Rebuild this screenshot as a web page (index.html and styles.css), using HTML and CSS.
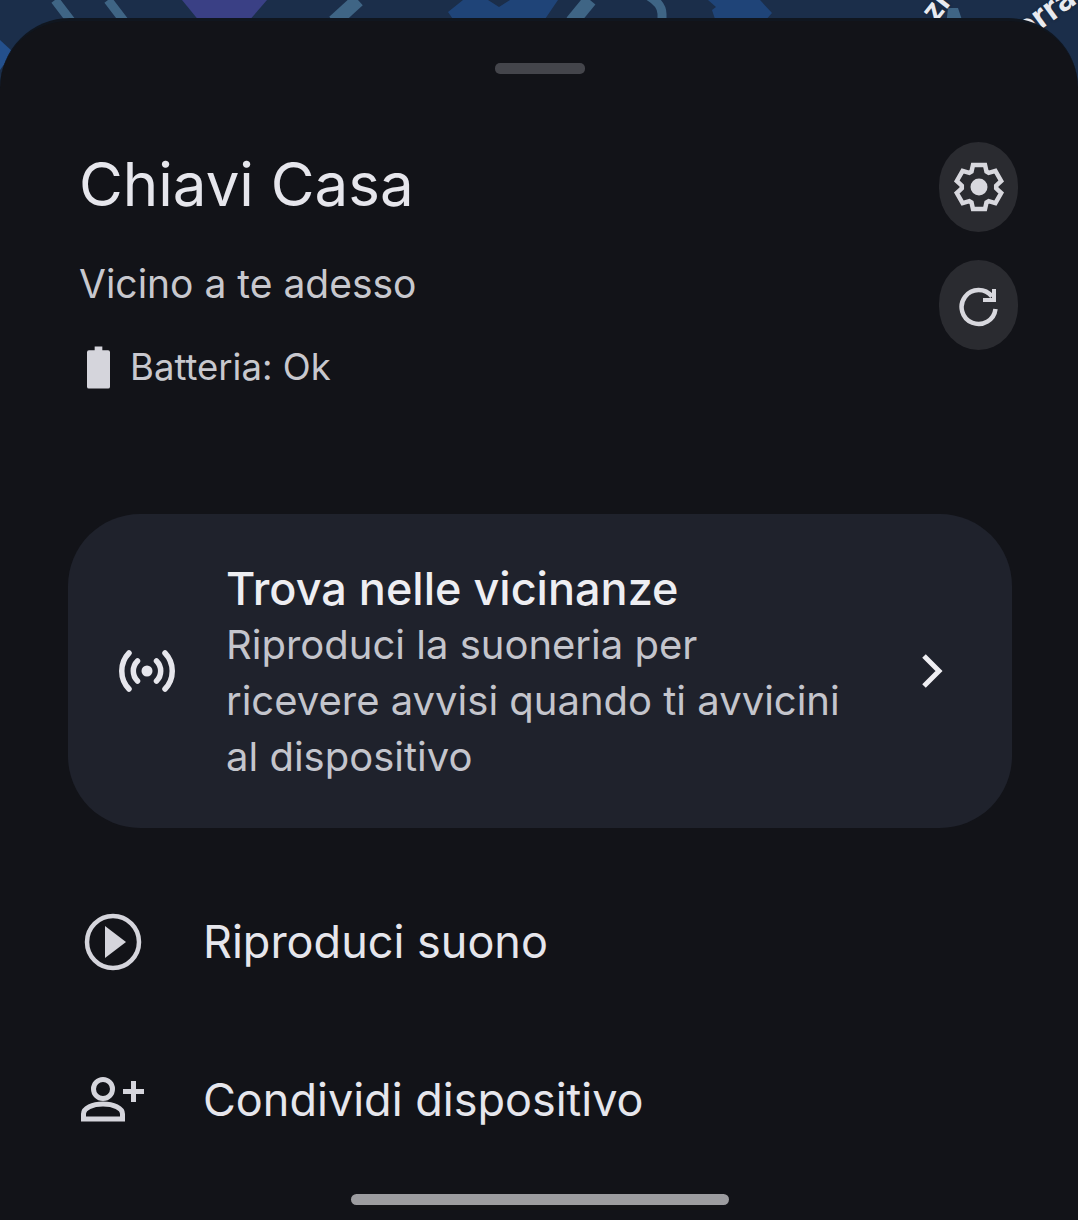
FILE: index.html
```html
<!DOCTYPE html>
<html lang="it">
<head>
<meta charset="utf-8">
<title>Chiavi Casa</title>
<link rel="stylesheet" href="styles.css">
</head>
<body>
<div class="map">
  <svg class="map-art" viewBox="0 0 1078 90" width="1078" height="90">
    <path d="M182 0h85l-19 22h-48z" fill="#3a4085"/>
    <path d="M448 12l15-12h25l11 7 11-7h48l-15 22h-88z" fill="#1f4478"/>
    <path d="M708 0h52l12 13-8 9h-48l-4-12 4-3z" fill="#1f4478"/>
    <path d="M0 40l13 12-13 18z" fill="#24508c"/>
    <path d="M948 8h10l6 18h-18z" fill="#3f6585"/>
    <g fill="none" stroke="#3f6585">
      <path d="M55 0l16 21M108 0l16 21" stroke-width="9"/>
      <path d="M358 0l-24 22" stroke-width="14"/>
      <path d="M590 0l-18 22" stroke-width="14"/>
      <path d="M645-6c12 6 17 12 17 20v8" stroke-width="9"/>
    </g>
  </svg>
  <span class="map-label map-label-a">zi</span>
  <span class="map-label map-label-b">erra</span>
</div>
<main class="sheet">
  <div class="handle"></div>
  <header class="head">
    <div class="head-text">
      <h1 class="title">Chiavi Casa</h1>
      <p class="subtitle">Vicino a te adesso</p>
      <div class="battery">
        <svg class="battery-icon" viewBox="0 0 24 44" width="23" height="43"><path d="M8 0h8v4h6a2 2 0 0 1 2 2v36a2 2 0 0 1-2 2H2a2 2 0 0 1-2-2V6a2 2 0 0 1 2-2h6z" fill="#d5d5dc"/></svg>
        <span class="battery-text">Batteria: Ok</span>
      </div>
    </div>
    <div class="head-actions">
      <button class="round-btn" aria-label="Impostazioni">
        <svg viewBox="-26 -26 52 52" width="52" height="52"><path d="M-6-22H6L7.500-15.500 9.700-14.200 16.400-16.200 22.200-6 17.200-1.300V1.300L22.200 6 16.400 16.200 9.700 14.200 7.500 15.500 6 22H-6L-7.500 15.500-9.700 14.200-16.400 16.200-22.200 6-17.200 1.300V-1.300L-22.200-6-16.400-16.200-9.700-14.200-7.500-15.500Z" fill="none" stroke="#d8d8de" stroke-width="4.500" stroke-linejoin="miter"/><circle r="8.500" fill="#d8d8de"/></svg>
      </button>
      <button class="round-btn" aria-label="Aggiorna">
        <svg viewBox="0 0 44 44" width="44" height="44"><path d="M35 13.500A17 17 0 1 0 38.500 26" fill="none" stroke="#d8d8de" stroke-width="4.500"/><path d="M39 6v13H26v-4h9V6z" fill="#d8d8de"/></svg>
      </button>
    </div>
  </header>
  <section class="card">
    <svg class="card-icon" viewBox="0 0 60 44" width="60" height="44">
      <circle cx="30" cy="22" r="5.500" fill="#e6e6ec"/>
      <g fill="none" stroke="#e6e6ec" stroke-width="5.500" stroke-linecap="round">
        <path d="M20.500 12a14 14 0 0 0 0 20M39.500 12a14 14 0 0 1 0 20"/>
        <path d="M12 4a26 26 0 0 0 0 36M48 4a26 26 0 0 1 0 36"/>
      </g>
    </svg>
    <div class="card-text">
      <h2 class="card-title">Trova nelle vicinanze</h2>
      <p class="card-body">Riproduci la suoneria per<br>ricevere avvisi quando ti avvicini<br>al dispositivo</p>
    </div>
    <svg class="chevron" viewBox="0 0 24 36" width="24" height="36"><path d="M4 3l15 15L4 33" fill="none" stroke="#eeeef2" stroke-width="5"/></svg>
  </section>
  <div class="row row-sound">
    <svg class="row-icon" viewBox="0 0 60 60" width="60" height="60"><circle cx="30" cy="30" r="26" fill="none" stroke="#d5d5dc" stroke-width="4.500"/><path d="M22 14l21 16-21 16z" fill="#d5d5dc"/></svg>
    <span class="row-label">Riproduci suono</span>
  </div>
  <div class="row row-share">
    <svg class="row-icon" viewBox="0 0 66 48" width="66" height="48"><circle cx="23" cy="13" r="9.500" fill="none" stroke="#d5d5dc" stroke-width="5"/><path d="M3.500 43v-5c0-6 9-10 19.500-10s19.500 4 19.500 10v5z" fill="none" stroke="#d5d5dc" stroke-width="5"/><path d="M43 15.500h21M53.500 5v21" fill="none" stroke="#d5d5dc" stroke-width="5"/></svg>
    <span class="row-label">Condividi dispositivo</span>
  </div>
  <div class="nav-bar"></div>
</main>
</body>
</html>
```

FILE: styles.css
```css
* { box-sizing: border-box; }
html, body { margin: 0; padding: 0; }
body {
  width: 1078px;
  height: 1220px;
  overflow: hidden;
  position: relative;
  background: #1b2e4a;
  font-family: Inter, Roboto, sans-serif;
  padding-top: 18px;
}
.map { position: absolute; inset: 0 0 auto 0; height: 90px; }
.map-art { display: block; }
.map-label {
  position: absolute;
  color: #e8eaf0;
  font-weight: 700;
  line-height: 1;
  text-shadow: 0 0 3px #14202f;
}
.map-label-a { left: 922px; top: -8px; font-size: 30px; transform: rotate(-52deg); }
.map-label-b { left: 1012px; top: -4px; font-size: 33px; transform: rotate(-36deg); }
.sheet {
  position: relative;
  height: 1202px;
  background: #121318;
  border-top: 3px solid #10161f;
  border-radius: 70px 70px 0 0;
  padding-top: 42px;
}
.handle {
  width: 90px;
  height: 11px;
  margin: 0 0 0 495px;
  border-radius: 5px;
  background: #44454b;
}
.head {
  display: flex;
  justify-content: space-between;
  align-items: flex-start;
  padding: 74px 60px 0 79px;
}
.title {
  margin: 0;
  font-size: 60px;
  line-height: 72px;
  font-weight: 400;
  color: #e6e6ec;
}
.subtitle {
  margin: 40px 0 0;
  font-size: 39px;
  line-height: 48px;
  font-weight: 400;
  color: #c8c8ce;
}
.battery {
  display: flex;
  align-items: center;
  gap: 20px;
  margin-top: 38px;
  padding-left: 8px;
}
.battery-text {
  margin-top: -2px;
  font-size: 36.500px;
  line-height: 44px;
  color: #c8c8ce;
}
.head-actions {
  display: flex;
  flex-direction: column;
  gap: 28px;
  margin-top: -6px;
}
.round-btn {
  width: 79px;
  height: 90px;
  padding: 0;
  border: 0;
  border-radius: 40px / 44px;
  background: #2a2b30;
  display: flex;
  align-items: center;
  justify-content: center;
}
.card {
  display: flex;
  align-items: center;
  width: 944px;
  height: 314px;
  margin: 125px 0 0 68px;
  padding: 0 68px 0 49px;
  border-radius: 72px;
  background: #1f222c;
}
.card-icon { flex: none; }
.card-text { flex: 1; margin: 4px 0 0 49px; }
.card-title {
  margin: 0;
  font-size: 45px;
  line-height: 56px;
  font-weight: 500;
  color: #eeeef2;
}
.card-body {
  margin: 0;
  font-size: 40px;
  line-height: 56px;
  color: #c4c5cc;
}
.chevron { flex: none; }
.row { display: flex; align-items: center; padding-left: 83px; height: 60px; }
.row-sound { margin-top: 84px; }
.row-share { margin-top: 98px; padding-left: 80px; }
.row-icon { flex: none; }
.row-label { font-size: 45px; line-height: 60px; color: #e6e6ec; }
.row-sound .row-label { margin-left: 60px; }
.row-share .row-label { margin-left: 57px; }
.nav-bar {
  position: absolute;
  left: 351px;
  bottom: 15px;
  width: 378px;
  height: 11px;
  border-radius: 6px;
  background: #9c9ca0;
}
```
